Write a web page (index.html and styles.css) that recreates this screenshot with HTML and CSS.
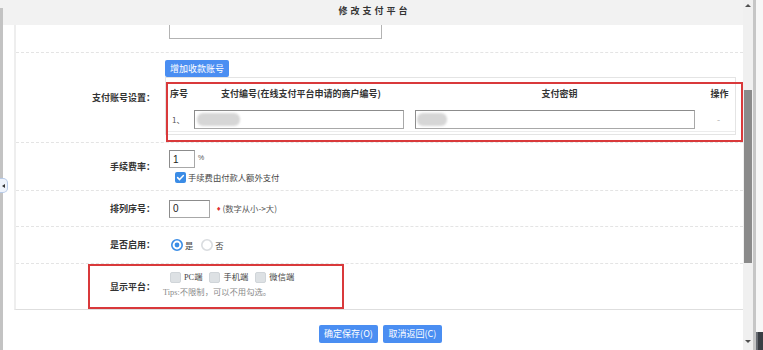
FILE: index.html
```html
<!DOCTYPE html>
<html lang="zh-CN">
<head>
<meta charset="utf-8">
<title>修改支付平台</title>
<link rel="stylesheet" href="styles.css">
</head>
<body>
<div class="screen">
  <div class="edge-left"></div>
  <div class="dialog">
    <div class="dlg-head">修改支付平台</div>
    <div class="dlg-body">
      <div class="panel">
        <div class="row row-top">
          <div class="label"></div>
          <div class="cell cell-top"><div class="textarea"></div></div>
        </div>

        <div class="row row-acc">
          <div class="label">支付账号设置：</div>
          <div class="cell cell-acc">
            <button class="btn" type="button">增加收款账号</button>
            <div class="acc-table">
              <div class="tr th">
                <div class="c1">序号</div>
                <div class="c2">支付编号(在线支付平台申请的商户编号)</div>
                <div class="c3">支付密钥</div>
                <div class="c4">操作</div>
              </div>
              <div class="tr td">
                <div class="c1">1、</div>
                <div class="c2"><div class="field fw-id"><span class="blob blob-id"></span></div></div>
                <div class="c3"><div class="field fw-key"><span class="blob blob-key"></span></div></div>
                <div class="c4">-</div>
              </div>
              <div class="mark mark-acc"></div>
            </div>
          </div>
        </div>

        <div class="row row-fee">
          <div class="label">手续费率：</div>
          <div class="cell cell-fee">
            <div class="fee-line">
              <div class="field f-num f-fee">1</div>
              <span class="pct">%</span>
            </div>
            <label class="chk-line">
              <span class="chk chk-on"><svg viewBox="0 0 11 11" width="11" height="11"><path d="M2.6 5.6 L4.6 7.6 L8.4 3.6" fill="none" stroke="#fff" stroke-width="1.5" stroke-linecap="round" stroke-linejoin="round"/></svg></span>
              <span class="small">手续费由付款人额外支付</span>
            </label>
          </div>
        </div>

        <div class="row row-sort">
          <div class="label">排列序号：</div>
          <div class="cell cell-sort">
            <div class="field f-num f-sort">0</div>
            <span class="req">♦</span>
            <span class="small hint">(数字从小-&gt;大)</span>
          </div>
        </div>

        <div class="row row-enable">
          <div class="label">是否启用：</div>
          <div class="cell cell-enable">
            <span class="radio"><svg viewBox="0 0 12 12" width="12" height="12"><circle cx="6" cy="6" r="5.2" fill="#fff" stroke="#3a8de6" stroke-width="1.6"/><circle cx="6" cy="6" r="2.4" fill="#3a8de6"/></svg></span>
            <span class="small opt">是</span>
            <span class="radio radio-off"><svg viewBox="0 0 12 12" width="12" height="12"><circle cx="6" cy="6" r="5.2" fill="#fff" stroke="#d9dcdf" stroke-width="1.6"/></svg></span>
            <span class="small opt">否</span>
          </div>
        </div>

        <div class="row row-platform">
          <div class="label">显示平台：</div>
          <div class="cell cell-platform">
            <div class="plat-line">
              <span class="chk chk-off"></span><span class="small pl">PC端</span>
              <span class="chk chk-off"></span><span class="small pl">手机端</span>
              <span class="chk chk-off"></span><span class="small pl">微信端</span>
            </div>
            <div class="tips">Tips:不限制，可以不用勾选。</div>
          </div>
          <div class="mark mark-plat"></div>
        </div>
      </div>

      <div class="actions">
        <button class="abtn" type="button">确定保存(O)</button>
        <button class="abtn" type="button">取消返回(C)</button>
      </div>
    </div>
  </div>
  <div class="vscroll">
    <div class="arr arr-up"></div>
    <div class="thumb"></div>
    <div class="track-rest"></div>
    <div class="arr arr-down"></div>
  </div>
  <div class="edge-right">
    <div class="rline"></div>
    <div class="rpad"><div class="tray"></div></div>
  </div>
  <div class="side-tab"><span class="side-arrow"></span></div>
</div>
</body>
</html>
```

FILE: styles.css
```css
* { box-sizing: border-box; margin: 0; padding: 0; }
html, body { width: 763px; height: 350px; overflow: hidden; background: #fff; }
body {
  font-family: "Noto Sans CJK SC", "Liberation Sans", sans-serif;
  font-size: 9px;
  color: #333;
}

.screen { display: flex; width: 763px; height: 350px; position: relative; }

.edge-left { width: 3px; background: linear-gradient(#f2f2f2 0 8px, #c3c3c3 8px); }

.dialog { width: 740px; display: flex; flex-direction: column; }
.dlg-head {
  height: 25px;
  background: #f2f2f2;
  text-align: center;
  font-weight: bold;
  letter-spacing: 3px;
  padding: 5px 0 0 3px;
  line-height: 12px;
  color: #333;
}
.dlg-body { flex: 1; padding-left: 11px; background: #fff; }

.panel { border-left: 2px solid #eeeeee; border-bottom: 1px solid #dedede; }

.row {
  display: grid;
  grid-template-columns: 149px 1fr;
  border-bottom: 1px dashed #e4e4e4;
  position: relative;
}
.row-top { height: 28px; }
.row-acc { height: 90px; }
.row-fee { height: 48px; }
.row-sort { height: 36px; }
.row-enable { height: 37px; }
.row-platform { height: 45px; border-bottom: none; }

.label {
  text-align: right;
  padding-right: 10px;
  font-weight: bold;
  align-self: center;
  color: #333;
  line-height: 12px;
}

.cell { align-self: center; }
.cell-top { align-self: start; }
.textarea {
  margin-left: 4px;
  width: 213px;
  height: 14px;
  border: 1px solid #b3b3b3;
  border-top: none;
}

.cell-acc { align-self: start; padding-top: 7px; }
.btn {
  display: block;
  height: 17px;
  padding: 0 5px;
  background: #4a8ef2;
  color: #fff;
  border: none;
  border-radius: 2px;
  font-family: inherit;
  font-size: 9px;
  line-height: 17px;
}

.acc-table {
  position: relative;
  width: 571px;
  border: 1px solid #e4e4e4;
  padding-bottom: 2px;
}
.tr { display: grid; grid-template-columns: 28px 214px 287px 40px; align-items: center; }
.th { height: 30px; font-weight: bold; }
.th .c1 { padding-left: 4px; }
.th .c2 { text-align: center; }
.th .c3 { text-align: center; padding-left: 16px; }
.th .c4 { text-align: center; padding-left: 9px; }
.td { height: 24px; border-bottom: 1px solid #ececec; }
.td .c1 { padding-left: 6px; font-size: 8px; color: #555; }
.td .c4 { text-align: center; padding-left: 7px; color: #b0b0b0; }

.field {
  height: 19px;
  border: 1px solid #a8a8a8;
  border-top-color: #8c8c8c;
  border-left-color: #8c8c8c;
  background: #fff;
  display: flex;
  align-items: center;
}
.fw-id { width: 210px; padding-left: 2px; }
.fw-key { width: 280px; margin-left: 7px; padding-left: 1px; }
.blob {
  display: block;
  height: 13px;
  border-radius: 6px;
  background: #d6d6d6;
  filter: blur(1.2px);
}
.blob-id { width: 43px; }
.blob-key { width: 30px; }

.mark { position: absolute; border: 2px solid #d9393b; }
.mark-acc { left: 0; top: 4px; width: 577px; height: 60px; }
.mark-plat { left: 72px; top: 0; width: 256px; height: 45px; }

.small { font-size: 8.3px; color: #444; line-height: 11px; }

.fee-line { display: flex; align-items: flex-start; margin-left: 4px; }
.f-num {
  height: 18px;
  padding-left: 3px;
  font-family: "Liberation Sans", sans-serif;
  font-size: 10px;
  color: #222;
}
.f-fee { width: 26px; }
.pct { font-size: 7px; margin: 4px 0 0 3px; color: #555; font-family: "Liberation Sans", sans-serif; }

.chk-line { display: flex; align-items: center; gap: 2px; margin: 4px 0 0 10px; }
.chk { display: block; width: 11px; height: 11px; border-radius: 2px; flex: none; }
.chk-on { background: #3b8ce6; }
.chk-on svg { display: block; }
.chk-off { background: #dde1e4; border: 1px solid #d0d5d9; }

.cell-sort { display: flex; align-items: center; margin-left: 4px; }
.f-sort { width: 41px; }
.req { color: #e03131; font-size: 6px; margin: 0 1px 0 6px; font-family: "DejaVu Sans", sans-serif; }
.hint { color: #555; }

.cell-enable { display: flex; align-items: center; margin-left: 6px; }
.radio { display: block; width: 12px; height: 12px; }
.radio svg { display: block; }
.opt { margin: 0 8px 0 2px; }

.cell-platform { align-self: start; padding-top: 8px; }
.plat-line { display: flex; align-items: center; margin-left: 5px; }
.pl { margin: 0 7px 0 3px; font-family: "Liberation Serif", "Noto Sans CJK SC", serif; }
.tips {
  margin: 4px 0 0 -2px;
  font-size: 8.3px;
  line-height: 11px;
  color: #8a8a8a;
  font-family: "Liberation Serif", "Noto Sans CJK SC", serif;
}

.actions { display: flex; justify-content: center; gap: 5px; margin-top: 15px; padding-left: 4px; }
.abtn {
  width: 59px;
  height: 18px;
  background: #4a8ef2;
  color: #fff;
  border: none;
  border-radius: 2px;
  font-family: "Noto Sans CJK SC", "Liberation Sans", sans-serif;
  font-size: 9px;
  line-height: 18px;
}

.vscroll { width: 10px; background: #f0f0f0; display: flex; flex-direction: column; }
.arr { height: 10px; display: flex; justify-content: center; align-items: center; }
.arr-up::before {
  content: "";
  border-left: 3px solid transparent;
  border-right: 3px solid transparent;
  border-bottom: 3px solid #505050;
}
.arr-down { height: 14px; align-items: flex-start; padding-top: 4px; }
.arr-down::before {
  content: "";
  border-left: 3px solid transparent;
  border-right: 3px solid transparent;
  border-top: 3px solid #505050;
}
.thumb { height: 173px; margin: 80px 1px 0; background: #8a8a8a; }
.track-rest { flex: 1; }

.edge-right { width: 10px; display: flex; }
.rline { width: 3px; background: #c6c6c6; }
.rpad { flex: 1; background: #f7f7f7; display: flex; flex-direction: column; justify-content: flex-end; }
.tray { height: 18px; background: #3a3e44; border-left: 2px solid #6a6e74; }

.side-tab {
  position: absolute;
  left: 0;
  top: 178px;
  width: 8px;
  height: 15px;
  border: 1px solid #b8cbe8;
  border-left: none;
  border-radius: 0 5px 5px 0;
  background: #eef3fb;
  display: flex;
  align-items: center;
  justify-content: center;
}
.side-arrow {
  display: block;
  border-top: 2px solid transparent;
  border-bottom: 2px solid transparent;
  border-right: 3px solid #333;
}
```
